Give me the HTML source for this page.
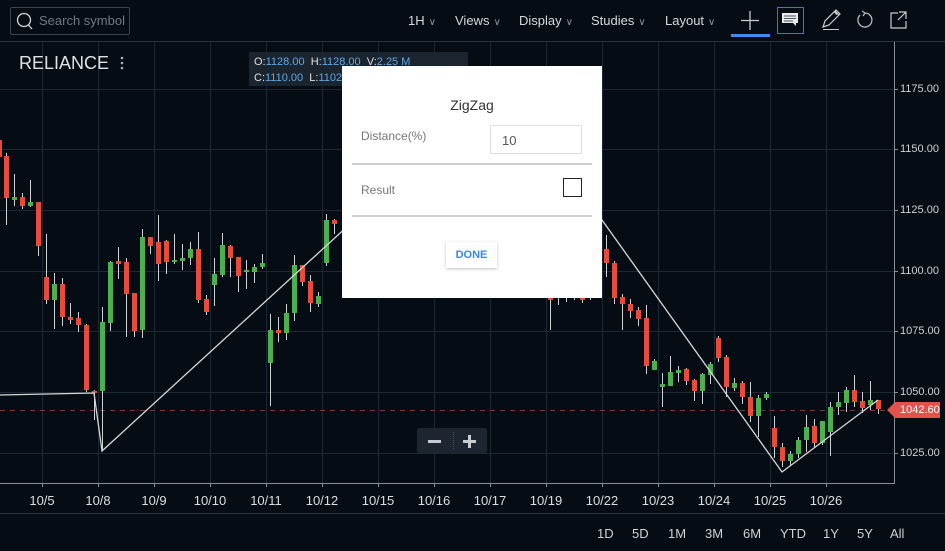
<!DOCTYPE html>
<html><head><meta charset="utf-8"><style>
*{margin:0;padding:0;box-sizing:border-box}
body{width:945px;height:551px;background:#050c14;overflow:hidden;position:relative;font-family:"Liberation Sans",sans-serif;color:#ddd}
.abs{position:absolute}
.menu{position:absolute;top:13px;font-size:13px;color:#d6d9dc}
.menu i{font-style:normal;color:#8a9098;font-size:10px;margin-left:4px}
.ax{position:absolute;left:900px;font-size:11px;color:#cfd2d5}
.dt{position:absolute;top:493px;font-size:13px;color:#dcdfe2;width:50px;text-align:center}
.rg{position:absolute;top:526px;font-size:13px;color:#cfd2d5}
</style></head><body>
<svg class="abs" style="left:0;top:0" width="945" height="551">
<g stroke="#1c2834" stroke-width="1">
<line x1="0" y1="89.5" x2="894" y2="89.5"/><line x1="0" y1="149.5" x2="894" y2="149.5"/><line x1="0" y1="210.5" x2="894" y2="210.5"/><line x1="0" y1="271.5" x2="894" y2="271.5"/><line x1="0" y1="331.5" x2="894" y2="331.5"/><line x1="0" y1="392.5" x2="894" y2="392.5"/><line x1="0" y1="453.5" x2="894" y2="453.5"/>
<line x1="42.5" y1="42" x2="42.5" y2="483"/><line x1="98.5" y1="42" x2="98.5" y2="483"/><line x1="154.5" y1="42" x2="154.5" y2="483"/><line x1="210.5" y1="42" x2="210.5" y2="483"/><line x1="266.5" y1="42" x2="266.5" y2="483"/><line x1="322.5" y1="42" x2="322.5" y2="483"/><line x1="378.5" y1="42" x2="378.5" y2="483"/><line x1="434.5" y1="42" x2="434.5" y2="483"/><line x1="490.5" y1="42" x2="490.5" y2="483"/><line x1="546.5" y1="42" x2="546.5" y2="483"/><line x1="602.5" y1="42" x2="602.5" y2="483"/><line x1="658.5" y1="42" x2="658.5" y2="483"/><line x1="714.5" y1="42" x2="714.5" y2="483"/><line x1="770.5" y1="42" x2="770.5" y2="483"/><line x1="826.5" y1="42" x2="826.5" y2="483"/>
</g>
<line x1="0" y1="410.5" x2="890" y2="410.5" stroke="#7a3a3a" stroke-width="1" stroke-dasharray="5,5"/>
<line x1="0" y1="41.5" x2="945" y2="41.5" stroke="#2a323c"/>
<line x1="0" y1="513.5" x2="945" y2="513.5" stroke="#2a323c"/>
<line x1="894.5" y1="42" x2="894.5" y2="483" stroke="#8a8f96"/>
<line x1="0" y1="483.5" x2="895" y2="483.5" stroke="#8a8f96"/>
<g stroke="#8a8f96"><line x1="42.5" y1="483" x2="42.5" y2="487"/><line x1="98.5" y1="483" x2="98.5" y2="487"/><line x1="154.5" y1="483" x2="154.5" y2="487"/><line x1="210.5" y1="483" x2="210.5" y2="487"/><line x1="266.5" y1="483" x2="266.5" y2="487"/><line x1="322.5" y1="483" x2="322.5" y2="487"/><line x1="378.5" y1="483" x2="378.5" y2="487"/><line x1="434.5" y1="483" x2="434.5" y2="487"/><line x1="490.5" y1="483" x2="490.5" y2="487"/><line x1="546.5" y1="483" x2="546.5" y2="487"/><line x1="602.5" y1="483" x2="602.5" y2="487"/><line x1="658.5" y1="483" x2="658.5" y2="487"/><line x1="714.5" y1="483" x2="714.5" y2="487"/><line x1="770.5" y1="483" x2="770.5" y2="487"/><line x1="826.5" y1="483" x2="826.5" y2="487"/>
<line x1="894" y1="89.5" x2="898" y2="89.5"/><line x1="894" y1="149.5" x2="898" y2="149.5"/><line x1="894" y1="210.5" x2="898" y2="210.5"/><line x1="894" y1="271.5" x2="898" y2="271.5"/><line x1="894" y1="331.5" x2="898" y2="331.5"/><line x1="894" y1="392.5" x2="898" y2="392.5"/><line x1="894" y1="453.5" x2="898" y2="453.5"/></g>
<g stroke="#cfd2d5" stroke-width="1">
<line x1="6.5" y1="153" x2="6.5" y2="225"/><line x1="14.5" y1="174" x2="14.5" y2="206"/><line x1="22.5" y1="193" x2="22.5" y2="209"/><line x1="30.5" y1="180" x2="30.5" y2="207"/><line x1="38.5" y1="202" x2="38.5" y2="256"/><line x1="46.5" y1="234" x2="46.5" y2="304"/><line x1="54.5" y1="273" x2="54.5" y2="329"/><line x1="62.5" y1="278" x2="62.5" y2="326"/><line x1="70.5" y1="303" x2="70.5" y2="324"/><line x1="78.5" y1="312" x2="78.5" y2="332"/><line x1="86.5" y1="324" x2="86.5" y2="392"/><line x1="94.5" y1="390" x2="94.5" y2="420"/><line x1="102.5" y1="307" x2="102.5" y2="451"/><line x1="110.5" y1="261" x2="110.5" y2="331"/><line x1="118.5" y1="247" x2="118.5" y2="279"/><line x1="126.5" y1="258" x2="126.5" y2="337"/><line x1="134.5" y1="293" x2="134.5" y2="337"/><line x1="142.5" y1="229" x2="142.5" y2="338"/><line x1="150.5" y1="237" x2="150.5" y2="254"/><line x1="158.5" y1="215" x2="158.5" y2="281"/><line x1="166.5" y1="240" x2="166.5" y2="274"/><line x1="174.5" y1="234" x2="174.5" y2="264"/><line x1="182.5" y1="244" x2="182.5" y2="270"/><line x1="190.5" y1="242" x2="190.5" y2="265"/><line x1="198.5" y1="232" x2="198.5" y2="303"/><line x1="206.5" y1="295" x2="206.5" y2="315"/><line x1="214.5" y1="258" x2="214.5" y2="306"/><line x1="222.5" y1="233" x2="222.5" y2="277"/><line x1="230.5" y1="245" x2="230.5" y2="277"/><line x1="238.5" y1="257" x2="238.5" y2="292"/><line x1="246.5" y1="260" x2="246.5" y2="289"/><line x1="254.5" y1="264" x2="254.5" y2="283"/><line x1="262.5" y1="254" x2="262.5" y2="269"/><line x1="270.5" y1="314" x2="270.5" y2="406"/><line x1="278.5" y1="317" x2="278.5" y2="342"/><line x1="286.5" y1="304" x2="286.5" y2="340"/><line x1="294.5" y1="255" x2="294.5" y2="321"/><line x1="302.5" y1="265" x2="302.5" y2="286"/><line x1="310.5" y1="275" x2="310.5" y2="312"/><line x1="318.5" y1="292" x2="318.5" y2="307"/><line x1="326.5" y1="214" x2="326.5" y2="266"/><line x1="334.5" y1="219" x2="334.5" y2="234"/>
<line x1="550.5" y1="288" x2="550.5" y2="330"/><line x1="558.5" y1="290" x2="558.5" y2="305"/><line x1="566.5" y1="290" x2="566.5" y2="302"/><line x1="574.5" y1="290" x2="574.5" y2="300"/><line x1="582.5" y1="285" x2="582.5" y2="303"/><line x1="590.5" y1="288" x2="590.5" y2="300"/>
<line x1="606.5" y1="235" x2="606.5" y2="277"/><line x1="614.5" y1="261" x2="614.5" y2="304"/><line x1="622.5" y1="294" x2="622.5" y2="330"/><line x1="630.5" y1="299" x2="630.5" y2="318"/><line x1="638.5" y1="307" x2="638.5" y2="326"/><line x1="646.5" y1="305" x2="646.5" y2="374"/><line x1="654.5" y1="359" x2="654.5" y2="370"/><line x1="662.5" y1="373" x2="662.5" y2="407"/><line x1="670.5" y1="356" x2="670.5" y2="386"/><line x1="678.5" y1="366" x2="678.5" y2="382"/><line x1="686.5" y1="368" x2="686.5" y2="385"/><line x1="694.5" y1="379" x2="694.5" y2="401"/><line x1="702.5" y1="373" x2="702.5" y2="404"/><line x1="710.5" y1="362" x2="710.5" y2="384"/><line x1="718.5" y1="336" x2="718.5" y2="362"/><line x1="726.5" y1="355" x2="726.5" y2="397"/><line x1="734.5" y1="378" x2="734.5" y2="391"/><line x1="742.5" y1="381" x2="742.5" y2="404"/><line x1="750.5" y1="382" x2="750.5" y2="422"/><line x1="758.5" y1="395" x2="758.5" y2="437"/><line x1="766.5" y1="392" x2="766.5" y2="400"/><line x1="774.5" y1="416" x2="774.5" y2="458"/><line x1="782.5" y1="443" x2="782.5" y2="467"/><line x1="790.5" y1="451" x2="790.5" y2="465"/><line x1="798.5" y1="437" x2="798.5" y2="458"/><line x1="806.5" y1="415" x2="806.5" y2="452"/><line x1="814.5" y1="419" x2="814.5" y2="448"/><line x1="822.5" y1="421" x2="822.5" y2="445"/><line x1="830.5" y1="402" x2="830.5" y2="456"/><line x1="838.5" y1="392" x2="838.5" y2="415"/><line x1="846.5" y1="387" x2="846.5" y2="412"/><line x1="854.5" y1="375" x2="854.5" y2="407"/><line x1="862.5" y1="392" x2="862.5" y2="413"/><line x1="870.5" y1="381" x2="870.5" y2="410"/><line x1="878.5" y1="400" x2="878.5" y2="414"/>
</g>
<g fill="#e84b3a">
<rect x="0" y="140" width="2" height="17"/><rect x="4" y="156" width="5" height="42"/><rect x="20" y="197" width="5" height="9"/><rect x="36" y="202" width="5" height="44"/><rect x="44" y="277" width="5" height="23"/><rect x="60" y="284" width="5" height="33"/><rect x="68" y="317" width="5" height="3"/><rect x="76" y="318" width="5" height="7"/><rect x="84" y="325" width="5" height="65"/><rect x="92" y="391" width="5" height="2"/><rect x="116" y="261" width="5" height="3"/><rect x="124" y="262" width="5" height="32"/><rect x="132" y="293" width="5" height="38"/><rect x="148" y="237" width="5" height="9"/><rect x="156" y="242" width="5" height="22"/><rect x="164" y="241" width="5" height="21"/><rect x="196" y="249" width="5" height="51"/><rect x="204" y="299" width="5" height="13"/><rect x="228" y="246" width="5" height="12"/><rect x="236" y="257" width="5" height="19"/><rect x="276" y="330" width="5" height="3"/><rect x="300" y="265" width="5" height="17"/><rect x="308" y="281" width="5" height="22"/><rect x="332" y="220" width="5" height="4"/>
<rect x="548" y="292" width="5" height="8"/><rect x="580" y="290" width="5" height="10"/>
<rect x="604" y="249" width="5" height="14"/><rect x="612" y="263" width="5" height="35"/><rect x="620" y="297" width="5" height="7"/><rect x="628" y="304" width="5" height="7"/><rect x="636" y="310" width="5" height="9"/><rect x="644" y="318" width="5" height="48"/><rect x="684" y="369" width="5" height="12"/><rect x="692" y="380" width="5" height="11"/><rect x="716" y="338" width="5" height="20"/><rect x="724" y="357" width="5" height="30"/><rect x="740" y="383" width="5" height="14"/><rect x="748" y="397" width="5" height="19"/><rect x="772" y="428" width="5" height="19"/><rect x="780" y="447" width="5" height="14"/><rect x="812" y="426" width="5" height="17"/><rect x="852" y="390" width="5" height="12"/><rect x="860" y="401" width="5" height="7"/><rect x="876" y="400" width="5" height="9"/>
</g>
<g fill="#4caf50">
<rect x="12" y="197" width="5" height="3"/><rect x="28" y="202" width="5" height="4"/><rect x="52" y="284" width="5" height="16"/><rect x="100" y="322" width="5" height="69"/><rect x="108" y="262" width="5" height="61"/><rect x="140" y="237" width="5" height="93"/><rect x="172" y="260" width="5" height="2"/><rect x="180" y="258" width="5" height="3"/><rect x="188" y="249" width="5" height="9"/><rect x="212" y="274" width="5" height="11"/><rect x="220" y="245" width="5" height="30"/><rect x="244" y="270" width="5" height="2"/><rect x="252" y="267" width="5" height="5"/><rect x="260" y="263" width="5" height="4"/><rect x="268" y="330" width="5" height="33"/><rect x="284" y="313" width="5" height="20"/><rect x="292" y="265" width="5" height="48"/><rect x="316" y="296" width="5" height="8"/><rect x="324" y="220" width="5" height="43"/>
<rect x="556" y="295" width="5" height="3"/><rect x="564" y="294" width="5" height="4"/><rect x="572" y="295" width="5" height="2"/><rect x="588" y="292" width="5" height="4"/>
<rect x="652" y="361" width="5" height="9"/><rect x="660" y="384" width="5" height="3"/><rect x="668" y="372" width="5" height="14"/><rect x="676" y="370" width="5" height="3"/><rect x="700" y="374" width="5" height="17"/><rect x="708" y="364" width="5" height="11"/><rect x="732" y="383" width="5" height="5"/><rect x="756" y="398" width="5" height="18"/><rect x="764" y="394" width="5" height="4"/><rect x="788" y="454" width="5" height="7"/><rect x="796" y="440" width="5" height="14"/><rect x="804" y="427" width="5" height="13"/><rect x="820" y="421" width="5" height="22"/><rect x="828" y="407" width="5" height="25"/><rect x="836" y="402" width="5" height="5"/><rect x="844" y="390" width="5" height="13"/><rect x="868" y="400" width="5" height="5"/>
</g>
<polyline points="0,395 94,393 102,451 420,160 560,160 602,220 782,472 878,400" fill="none" stroke="#d8d8d8" stroke-width="1.3"/>
<polygon points="887,410 895,402 940,402 940,418 895,418" fill="#e0524a"/>
<circle cx="24" cy="20" r="6.5" fill="none" stroke="#d6d9dc" stroke-width="1.3"/><line x1="28.5" y1="25" x2="32" y2="29" stroke="#d6d9dc" stroke-width="1.3"/>
<line x1="741" y1="20.5" x2="759" y2="20.5" stroke="#c8ccd0" stroke-width="1.3"/><line x1="750" y1="11" x2="750" y2="30" stroke="#c8ccd0" stroke-width="1.3"/>
<rect x="731" y="34" width="39" height="3" fill="#3a8ef0"/>
<rect x="777.5" y="7.5" width="26" height="26" fill="none" stroke="#3e78c0"/>
<path d="M782 13h16v10h-2v3l-3-3h-11z" fill="#e8eaec"/><g stroke="#505860" stroke-width="1"><line x1="784" y1="16" x2="796" y2="16"/><line x1="784" y1="18.5" x2="796" y2="18.5"/><line x1="784" y1="21" x2="793" y2="21"/></g>
<path d="M823 27l2-6 11-11 4 4-11 11z M835 11l4 4" fill="none" stroke="#c8ccd0" stroke-width="1.2"/><line x1="823" y1="29.5" x2="839" y2="29.5" stroke="#c8ccd0"/><rect x="834" y="12" width="4" height="2" transform="rotate(45 836 13)" fill="#c8ccd0"/>
<path d="M860 15a7 7 0 1 0 5 -2" fill="none" stroke="#b8bcc0" stroke-width="1.3"/><path d="M862 11l3 2-2 3" fill="none" stroke="#b8bcc0" stroke-width="1.2"/>
<path d="M898 13h-7v15h15v-7 M899 12h7v7 M906 12l-8 8" fill="none" stroke="#c8ccd0" stroke-width="1.2"/>
<g fill="#aab0b6"><circle cx="122" cy="58" r="1.3"/><circle cx="122" cy="63" r="1.3"/><circle cx="122" cy="68" r="1.3"/></g>
</svg>
<div class="abs" style="left:10px;top:7px;width:120px;height:28px;border:1px solid #3a4450;border-radius:2px"></div>
<div class="abs" style="left:39px;top:13px;font-size:13px;color:#6f7880">Search symbol</div>
<div class="menu" style="left:408px">1H<i>∨</i></div>
<div class="menu" style="left:455px">Views<i>∨</i></div>
<div class="menu" style="left:519px">Display<i>∨</i></div>
<div class="menu" style="left:591px">Studies<i>∨</i></div>
<div class="menu" style="left:665px">Layout<i>∨</i></div>
<div class="abs" style="left:19px;top:53px;font-size:18px;color:#dfe2e5">RELIANCE</div>
<div class="abs" style="left:249px;top:52px;width:219px;height:34px;background:#1b2530;font-size:11px;line-height:16px;padding:2px 5px;color:#e0e0e0">O:<span style="color:#5ea8e8">1128.00</span>&nbsp; H:<span style="color:#5ea8e8">1128.00</span>&nbsp; V:<span style="color:#5ea8e8">2.25 M</span><br>C:<span style="color:#5ea8e8">1110.00</span>&nbsp; L:<span style="color:#5ea8e8">1102.00</span></div>
<div class="ax" style="top:83px">1175.00</div><div class="ax" style="top:143px">1150.00</div><div class="ax" style="top:204px">1125.00</div><div class="ax" style="top:265px">1100.00</div><div class="ax" style="top:325px">1075.00</div><div class="ax" style="top:386px">1050.00</div><div class="ax" style="top:447px">1025.00</div>
<div class="ax" style="top:404px;color:#fff">1042.60</div>
<div class="dt" style="left:17px">10/5</div><div class="dt" style="left:73px">10/8</div><div class="dt" style="left:129px">10/9</div><div class="dt" style="left:185px">10/10</div><div class="dt" style="left:241px">10/11</div><div class="dt" style="left:297px">10/12</div><div class="dt" style="left:353px">10/15</div><div class="dt" style="left:409px">10/16</div><div class="dt" style="left:465px">10/17</div><div class="dt" style="left:521px">10/19</div><div class="dt" style="left:577px">10/22</div><div class="dt" style="left:633px">10/23</div><div class="dt" style="left:689px">10/24</div><div class="dt" style="left:745px">10/25</div><div class="dt" style="left:801px">10/26</div>
<div class="rg" style="left:597px">1D</div><div class="rg" style="left:632px">5D</div><div class="rg" style="left:668px">1M</div><div class="rg" style="left:705px">3M</div><div class="rg" style="left:743px">6M</div><div class="rg" style="left:780px">YTD</div><div class="rg" style="left:823px">1Y</div><div class="rg" style="left:857px">5Y</div><div class="rg" style="left:890px">All</div>
<div class="abs" style="left:417px;top:428px;width:70px;height:25px;background:#1c2530;border-radius:2px"></div>
<div class="abs" style="left:428px;top:440px;width:13px;height:3px;background:#c8ccd0"></div>
<div class="abs" style="left:453px;top:432px;width:1px;height:17px;border-left:1px dotted #444c56"></div>
<div class="abs" style="left:463px;top:440px;width:13px;height:3px;background:#c8ccd0"></div>
<div class="abs" style="left:468px;top:435px;width:3px;height:13px;background:#c8ccd0"></div>
<div class="abs" style="left:342px;top:66px;width:260px;height:232px;background:#fff">
<div class="abs" style="left:0;top:31px;width:260px;text-align:center;font-size:14px;color:#333">ZigZag</div>
<div class="abs" style="left:19px;top:63px;font-size:12px;color:#777">Distance(%)</div>
<div class="abs" style="left:148px;top:59px;width:92px;height:29px;border:1px solid #ddd;font-size:13px;color:#555;padding:7px 0 0 11px">10</div>
<div class="abs" style="left:10px;top:97px;width:240px;height:2px;background:#cfcfcf"></div>
<div class="abs" style="left:19px;top:117px;font-size:12px;color:#777">Result</div>
<div class="abs" style="left:221px;top:112px;width:19px;height:19px;border:1px solid #222"></div>
<div class="abs" style="left:10px;top:149px;width:240px;height:2px;background:#cfcfcf"></div>
<div class="abs" style="left:104px;top:176px;width:51px;height:26px;background:#fff;box-shadow:0 1px 3px rgba(0,0,0,.25);font-size:11px;font-weight:bold;color:#3a88e0;text-align:center;line-height:26px">DONE</div>
</div>
</body></html>
